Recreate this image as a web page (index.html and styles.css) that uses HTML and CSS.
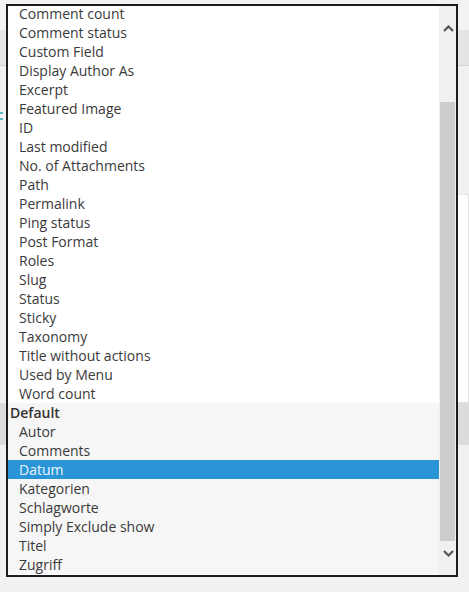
FILE: index.html
```html
<!DOCTYPE html>
<html lang="en">
<head>
    <meta charset="UTF-8">
    <meta name="viewport" content="width=device-width, initial-scale=1.0">
    <title>Columns</title>
    <link rel="stylesheet" href="styles.css">
</head>
<body>
    <div class="screen">
        <!-- settings page behind the open list -->
        <div class="backdrop">
            <div class="toolbar"></div>
            <div class="field-row"></div>
            <div class="hint"></div>
            <div class="panel"></div>
            <div class="table-head"></div>
        </div>

        <!-- open column picker -->
        <div class="listbox">
            <div class="options">
                <div class="opt">Comment count</div>
                <div class="opt">Comment status</div>
                <div class="opt">Custom Field</div>
                <div class="opt">Display Author As</div>
                <div class="opt">Excerpt</div>
                <div class="opt">Featured Image</div>
                <div class="opt">ID</div>
                <div class="opt">Last modified</div>
                <div class="opt">No. of Attachments</div>
                <div class="opt">Path</div>
                <div class="opt">Permalink</div>
                <div class="opt">Ping status</div>
                <div class="opt">Post Format</div>
                <div class="opt">Roles</div>
                <div class="opt">Slug</div>
                <div class="opt">Status</div>
                <div class="opt">Sticky</div>
                <div class="opt">Taxonomy</div>
                <div class="opt">Title without actions</div>
                <div class="opt">Used by Menu</div>
                <div class="opt">Word count</div>
                <div class="group">
                    <div class="group-label">Default</div>
                    <div class="opt">Autor</div>
                    <div class="opt">Comments</div>
                    <div class="opt selected">Datum</div>
                    <div class="opt">Kategorien</div>
                    <div class="opt">Schlagworte</div>
                    <div class="opt">Simply Exclude show</div>
                    <div class="opt">Titel</div>
                    <div class="opt">Zugriff</div>
                </div>
            </div>
            <div class="scrollbar">
                <div class="scroll-btn up">
                    <svg width="11" height="7" viewBox="0 0 11 7"><polyline points="1,6 5.5,1.5 10,6" /></svg>
                </div>
                <div class="track"><div class="thumb"></div></div>
                <div class="scroll-btn down">
                    <svg width="11" height="7" viewBox="0 0 11 7"><polyline points="1,1 5.5,5.5 10,1" /></svg>
                </div>
            </div>
        </div>
    </div>
</body>
</html>
```

FILE: styles.css
```css
* {
    margin: 0;
    padding: 0;
    box-sizing: border-box;
}

body {
    font-family: 'Open Sans', 'DejaVu Sans', sans-serif;
    background: #f1f1f1;
    color: #3a3a3a;
}

.screen {
    position: relative;
    width: 469px;
    height: 592px;
    overflow: hidden;
}

/* page behind */
.backdrop {
    display: flex;
    flex-direction: column;
    height: 100%;
}

.toolbar {
    height: 30px;
    background: #f3f3f3;
}

.field-row {
    height: 36px;
    background: #e4e4e4;
    border-bottom: 1px solid #d6d6d6;
}

/* sliver of a teal label at the left edge */
.hint {
    margin-top: 46px;
    width: 3px;
    height: 8px;
    border-top: 2px solid #5bb8bd;
    border-bottom: 2px solid #5bb8bd;
}

.panel {
    margin-top: 74px;
    margin-left: auto;
    width: 12px;
    height: 209px;
    background: #fff;
    border: 1px solid #e2e2e2;
}

.table-head {
    height: 42px;
    background: #dcdcdc;
}

/* list */
.listbox {
    position: absolute;
    top: 4px;
    left: 6px;
    width: 452px;
    height: 573px;
    border: 2px solid #1c1c1c;
    background: #fff;
    display: flex;
    overflow: hidden;
}

.options {
    flex: 1;
    margin-top: -2px;
    font-size: 14px;
}

.opt {
    height: 19px;
    line-height: 20px;
    padding-left: 11px;
    white-space: nowrap;
}

.group {
    background: #f6f6f6;
}

.group-label {
    height: 19px;
    line-height: 20px;
    padding-left: 2px;
    font-weight: 600;
    color: #333;
}

.opt.selected {
    background: #2a95d6;
    color: #eaf6ff;
}

/* scrollbar */
.scrollbar {
    width: 17px;
    background: #f0f0f0;
    display: flex;
    flex-direction: column;
}

.scroll-btn {
    height: 34px;
    display: flex;
    justify-content: center;
    padding-left: 1px;
}

.scroll-btn.up {
    padding-top: 19px;
}

.scroll-btn.down {
    padding-top: 9px;
}

.scroll-btn svg polyline {
    fill: none;
    stroke: #555;
    stroke-width: 2.2;
}

.track {
    flex: 1;
    padding: 62px 1px 0;
}

.thumb {
    height: 100%;
    background: #cdcdcd;
}
```
